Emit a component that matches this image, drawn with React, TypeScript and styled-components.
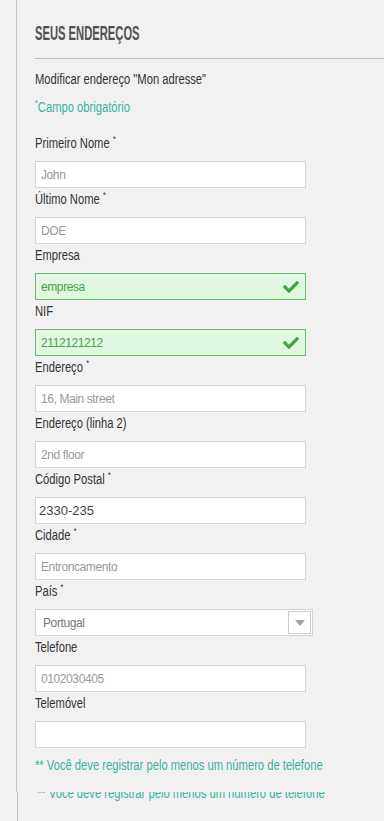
import styled, { createGlobalStyle } from "styled-components";
import { FaCheck } from "react-icons/fa";

const GlobalStyle = createGlobalStyle`
  html, body {
    margin: 0;
    padding: 0;
    background-color: #f1f1f1;
  }
  * {
    box-sizing: border-box;
  }
`;

const sans = `"Liberation Sans", Arial, sans-serif`;
const teal = "#35b3a3";

const Page = styled.div`
  margin-left: 16px;
  border-left: 1px solid #c4c4c4;
  padding: 21px 0 17px 18px;
  font-family: ${sans};
  color: #333;
`;

// the reference uses a condensed face; squeeze the regular one
const Narrow = styled.span<{ $scale?: number }>`
  display: inline-block;
  white-space: nowrap;
  transform: scaleX(${(p) => p.$scale ?? 0.8});
  transform-origin: left center;
`;

const Title = styled.h1`
  margin: 0;
  height: 24px;
  font-size: 20px;
  line-height: 24px;
  font-weight: bold;
  color: #505050;
  white-space: nowrap;
`;

const Rule = styled.hr`
  margin: 13px 0 0;
  border: none;
  border-top: 1px solid #bdbdbd;
`;

const Line = styled.p<{ $color?: string; $gap?: number }>`
  margin: ${(p) => p.$gap ?? 0}px 0 0;
  font-size: 14px;
  line-height: 20px;
  color: ${(p) => p.$color ?? "#333"};
  white-space: nowrap;
  sup {
    font-size: 9px;
    vertical-align: 6px;
    line-height: 0;
  }
`;

const Form = styled.div`
  display: flex;
  flex-direction: column;
  margin-top: 15px;
`;

const Field = styled.div`
  display: flex;
  flex-direction: column;
`;

const Label = styled.label`
  padding: 1px 0 8px;
  font-size: 14px;
  line-height: 20px;
  color: #333;
  sup {
    font-size: 9px;
    vertical-align: 6px;
    line-height: 0;
    margin-left: 4px;
  }
`;

const InputWrap = styled.div`
  position: relative;
  width: 271px;
  height: 27px;
  .check {
    position: absolute;
    right: 7px;
    top: 6px;
    color: #46a046;
    font-size: 16px;
  }
`;

const Input = styled.input<{ $valid?: boolean; $filled?: boolean }>`
  width: 100%;
  height: 27px;
  margin: 0;
  padding: 0 ${(p) => (p.$filled ? 3 : 5)}px;
  border: 1px solid ${(p) => (p.$valid ? "#6dbd6d" : "#d3d3d3")};
  background-color: ${(p) => (p.$valid ? "#dff8df" : "#fff")};
  color: ${(p) => (p.$valid ? "#4a9e4a" : p.$filled ? "#444" : "#999")};
  font-family: ${sans};
  font-size: ${(p) => (p.$filled ? 13 : 12)}px;
  letter-spacing: ${(p) => (p.$filled ? 0 : -0.4)}px;
  outline: none;
  border-radius: 0;
`;

const Select = styled.div`
  display: flex;
  align-items: center;
  justify-content: space-between;
  width: 278px;
  height: 27px;
  border: 1px solid #d3d3d3;
  background-color: #fff;
  padding: 0 1px 0 7px;
  font-size: 12px;
  letter-spacing: -0.4px;
  color: #777;
`;

const Arrow = styled.div`
  display: flex;
  align-items: center;
  justify-content: center;
  width: 23px;
  height: 23px;
  border: 1px solid #cfcfcf;
  &::after {
    content: "";
    border-left: 5px solid transparent;
    border-right: 5px solid transparent;
    border-top: 6px solid #a3a3a3;
    margin-top: 1px;
  }
`;

// the screenshot was stitched: a 1px-shifted strip with the note cut in half
const Clip = styled.div`
  margin-left: 17px;
  border-left: 1px solid #c4c4c4;
  height: 29px;
  overflow: hidden;
  padding-left: 19px;
  font-family: ${sans};
`;

const ClipText = styled(Line)`
  margin-top: -9px;
`;

type FieldDef = {
  label: string;
  value: string;
  required?: boolean;
  valid?: boolean;
  filled?: boolean;
};

const fields: FieldDef[] = [
  { label: "Primeiro Nome", value: "John", required: true },
  { label: "Último Nome", value: "DOE", required: true },
  { label: "Empresa", value: "empresa", valid: true },
  { label: "NIF", value: "2112121212", valid: true },
  { label: "Endereço", value: "16, Main street", required: true },
  { label: "Endereço (linha 2)", value: "2nd floor" },
  { label: "Código Postal", value: "2330-235", required: true, filled: true },
  { label: "Cidade", value: "Entroncamento", required: true },
];

const after: FieldDef[] = [
  { label: "Telefone", value: "0102030405" },
  { label: "Telemóvel", value: "" },
];

function FormField({ label, value, required, valid, filled }: FieldDef) {
  return (
    <Field>
      <Label>
        <Narrow>
          {label}
          {required && <sup>*</sup>}
        </Narrow>
      </Label>
      <InputWrap>
        <Input defaultValue={value} $valid={valid} $filled={filled} />
        {valid && <FaCheck className="check" />}
      </InputWrap>
    </Field>
  );
}

const note = "** Você deve registrar pelo menos um número de telefone";

export default function App() {
  return (
    <>
      <GlobalStyle />
      <Page>
        <Title>
          <Narrow $scale={0.56}>SEUS ENDEREÇOS</Narrow>
        </Title>
        <Rule />
        <Line $gap={10}>
          <Narrow>Modificar endereço "Mon adresse"</Narrow>
        </Line>
        <Line $gap={8} $color={teal}>
          <Narrow>
            <sup>*</sup>Campo obrigatório
          </Narrow>
        </Line>
        <Form>
          {fields.map((f) => (
            <FormField key={f.label} {...f} />
          ))}
          <Field>
            <Label>
              <Narrow>
                País<sup>*</sup>
              </Narrow>
            </Label>
            <Select>
              <span>Portugal</span>
              <Arrow />
            </Select>
          </Field>
          {after.map((f) => (
            <FormField key={f.label} {...f} />
          ))}
        </Form>
        <Line $gap={7} $color={teal}>
          <Narrow>{note}</Narrow>
        </Line>
      </Page>
      <Clip>
        <ClipText $color={teal}>
          <Narrow>{note}</Narrow>
        </ClipText>
      </Clip>
    </>
  );
}
